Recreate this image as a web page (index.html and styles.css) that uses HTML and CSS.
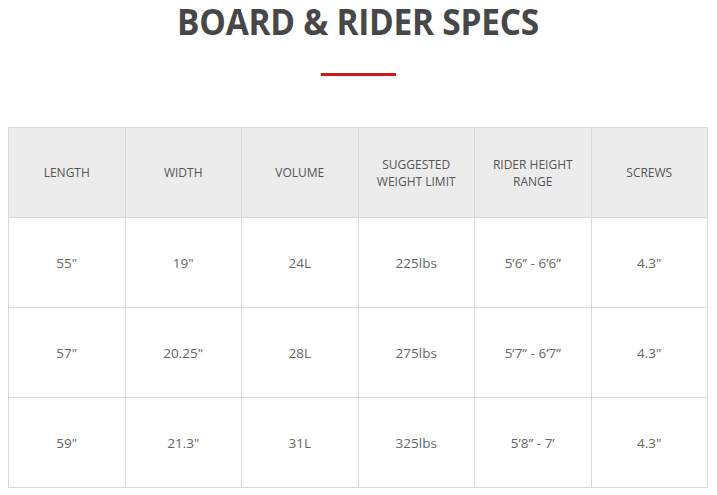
FILE: index.html
```html
<!DOCTYPE html>
<html>
<head>
<meta charset="utf-8">
<link rel="stylesheet" href="styles.css">
</head>
<body>
<div class="wrap">
  <h1 class="title">BOARD &amp; RIDER SPECS</h1>
  <div class="rule"></div>
  <table class="specs">
    <thead>
      <tr>
        <th>LENGTH</th>
        <th>WIDTH</th>
        <th>VOLUME</th>
        <th>SUGGESTED<br>WEIGHT LIMIT</th>
        <th>RIDER HEIGHT<br>RANGE</th>
        <th>SCREWS</th>
      </tr>
    </thead>
    <tbody>
      <tr><td>55"</td><td>19"</td><td>24L</td><td>225lbs</td><td>5’6” - 6’6”</td><td>4.3"</td></tr>
      <tr><td>57"</td><td>20.25"</td><td>28L</td><td>275lbs</td><td>5’7” - 6’7”</td><td>4.3"</td></tr>
      <tr><td>59"</td><td>21.3"</td><td>31L</td><td>325lbs</td><td>5’8” - 7’</td><td>4.3"</td></tr>
    </tbody>
  </table>
</div>
</body>
</html>
```
FILE: styles.css
```css
body {
  margin: 8px;
  background: #fff;
  font-family: "Open Sans", sans-serif;
}
.wrap {
  width: 700px;
}
.title {
  margin: 0;
  padding: 0;
  text-align: center;
  font-family: "Open Sans", sans-serif;
  font-weight: 700;
  font-size: 36px;
  line-height: 28px;
  color: #474747;
  letter-spacing: -0.3px;
  transform: scaleX(0.93);
}
.rule {
  width: 75px;
  height: 3px;
  background: #d1191b;
  margin: 37px auto 51px;
}
.specs {
  width: 700px;
  border-collapse: collapse;
  table-layout: fixed;
}
.specs th, .specs td {
  border: 1px solid #d9d9d9;
  text-align: center;
  vertical-align: middle;
  height: 89px;
  padding: 0 4px;
}
.specs th {
  background: #ececec;
  font-weight: 400;
  font-size: 12px;
  line-height: 17px;
  color: #555;
}
.specs td {
  font-size: 13.5px;
  color: #666;
}
```
